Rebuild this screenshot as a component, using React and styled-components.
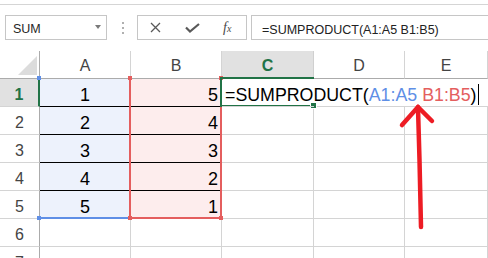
import React from 'react';
import styled, { createGlobalStyle, css } from 'styled-components';

const GlobalStyle = createGlobalStyle`
  html, body {
    margin: 0;
    padding: 0;
    background: #fff;
  }
  body {
    font-family: "Liberation Sans", Arial, sans-serif;
    overflow: hidden;
  }
`;

const GREEN = '#217346';
const GRID = '#d4d4d4';
const HEAD_LINE = '#ababab';

const tints = {
  blue: { fill: '#edf2fc', line: '#5f8fe6' },
  red: { fill: '#fdeded', line: '#e45e5e' },
};

// every grid item is placed by row/column so the overlays don't push cells around
const placed = css`
  grid-row: ${p => p.$r};
  grid-column: ${p => p.$c};
`;

const Screen = styled.div`
  position: relative;
  width: 488px;
  height: 258px;
  overflow: hidden;
  background: #fff;
`;

const RibbonEdge = styled.div`
  height: 4px;
  border-bottom: 1px solid #d5d5d5;
`;

const FormulaBar = styled.div`
  display: flex;
  align-items: center;
  height: 25px;
  margin-top: 10px;
  padding-left: 5px;
`;

const NameBox = styled.div`
  box-sizing: border-box;
  flex: none;
  width: 102px;
  height: 25px;
  border: 1px solid #c6c6c6;
  display: flex;
  align-items: flex-end;
  justify-content: space-between;
  padding: 0 5px 2px 7px;
  font-size: 12.5px;
  line-height: 15px;
  color: #262626;
`;

const DropArrow = styled.span`
  align-self: center;
  width: 0;
  height: 0;
  border-left: 3.5px solid transparent;
  border-right: 3.5px solid transparent;
  border-top: 4px solid #7a7a7a;
`;

const Grip = styled.div`
  flex: none;
  display: flex;
  flex-direction: column;
  gap: 3px;
  margin: 0 13px 0 15px;

  span {
    width: 2px;
    height: 2px;
    background: #b0b0b0;
  }
`;

const ActionBox = styled.div`
  box-sizing: border-box;
  flex: none;
  width: 110px;
  height: 25px;
  border: 1px solid #c6c6c6;
  display: flex;
  align-items: center;
  padding-left: 12px;
  gap: 24px;
  color: #595959;
`;

const Fx = styled.i`
  font-family: "Liberation Serif", "Times New Roman", serif;
  font-size: 14px;
  color: #4a4a4a;
  margin-left: -1px;

  small {
    font-size: 10px;
  }
`;

const FormulaInput = styled.div`
  box-sizing: border-box;
  flex: 1;
  height: 25px;
  margin-left: 4px;
  margin-right: -10px;
  border: 1px solid #c6c6c6;
  display: flex;
  align-items: flex-end;
  padding: 0 0 1px 10px;
  font-size: 12.5px;
  line-height: 15px;
  color: #222;
  white-space: nowrap;
`;

const Sheet = styled.div`
  display: grid;
  grid-template-columns: 40px 91px 91px 92px 91px 1fr;
  grid-template-rows: repeat(8, 28px);
  margin-top: 11px;
`;

const Corner = styled.div`
  ${placed}
  box-sizing: border-box;
  display: flex;
  justify-content: flex-end;
  align-items: flex-end;
  padding: 0 2px 3px 0;
  border-right: 1px solid ${HEAD_LINE};
  border-bottom: 1px solid ${HEAD_LINE};

  &::after {
    content: '';
    width: 0;
    height: 0;
    border-left: 19px solid transparent;
    border-bottom: 19px solid #dcdcdc;
  }
`;

const ColHeader = styled.div`
  ${placed}
  box-sizing: border-box;
  display: flex;
  justify-content: center;
  align-items: flex-end;
  padding-bottom: ${p => (p.$active ? 2 : 3)}px;
  font-size: 16px;
  line-height: 18px;
  color: ${p => (p.$active ? GREEN : '#444')};
  font-weight: ${p => (p.$active ? 'bold' : 'normal')};
  background: ${p => (p.$active ? '#e1e1e1' : '#fff')};
  border-right: 1px solid ${p => (p.$active ? '#d0d0d0' : GRID)};
  border-bottom: ${p => (p.$active ? `2px solid ${GREEN}` : `1px solid ${HEAD_LINE}`)};
`;

const RowHeader = styled.div`
  ${placed}
  box-sizing: border-box;
  display: flex;
  justify-content: center;
  align-items: flex-end;
  padding-bottom: 2px;
  font-size: 16px;
  line-height: 18px;
  color: ${p => (p.$active ? GREEN : '#444')};
  font-weight: ${p => (p.$active ? 'bold' : 'normal')};
  background: ${p => (p.$active ? '#e1e1e1' : '#fff')};
  border-right: ${p => (p.$active ? `2px solid ${GREEN}` : `1px solid ${HEAD_LINE}`)};
  border-bottom: 1px solid ${GRID};
`;

const Cell = styled.div`
  ${placed}
  box-sizing: border-box;
  display: flex;
  align-items: flex-end;
  justify-content: ${p => (p.$align === 'right' ? 'flex-end' : p.$align === 'center' ? 'center' : 'flex-start')};
  padding: 0 3px 1px 3px;
  font-size: 18px;
  line-height: 20px;
  color: #000;
  white-space: nowrap;
  background: ${p => (p.$tint ? tints[p.$tint].fill : '#fff')};
  border-right: ${p => (p.$open ? 'none' : `1px solid ${GRID}`)};
  border-bottom: 1px solid ${p => (p.$ruled ? '#000' : GRID)};
`;

const EditCell = styled(Cell)`
  position: relative;
  z-index: 4;
  overflow: visible;
  background: transparent;
  font-size: 17.8px;
`;

const Ref = styled.span`
  color: ${p => tints[p.$tint].line};
`;

const Caret = styled.span`
  display: inline-block;
  width: 1px;
  height: 21px;
  margin-left: 1px;
  vertical-align: -4px;
  background: #000;
`;

const RangeFrame = styled.div`
  position: relative;
  z-index: 2;
  pointer-events: none;
  grid-column: ${p => p.$c};
  grid-row: 2 / 7;
  margin-left: ${p => (p.$boxed ? -2 : 0)}px;
  border-bottom: 2px solid ${p => tints[p.$tint].line};
  border-left: ${p => (p.$boxed ? `2px solid ${tints[p.$tint].line}` : 'none')};
  border-right: ${p => (p.$boxed ? `2px solid ${tints[p.$tint].line}` : 'none')};
`;

const Handle = styled.span`
  position: absolute;
  width: 4px;
  height: 4px;
  background: ${p => tints[p.$tint].line};
  ${p => (p.$top ? 'top: -3px;' : 'bottom: -3px;')}
  ${p => (p.$right ? 'right: -3px;' : 'left: -3px;')}
`;

/* the active cell's right edge is hidden while its text spills into D and E */
const ActiveFrame = styled.div`
  position: relative;
  z-index: 3;
  pointer-events: none;
  grid-column: 4;
  grid-row: 2;
  margin: -2px 0 0 -2px;
  border: 2px solid ${GREEN};
  border-right: none;

  &::after {
    content: '';
    position: absolute;
    right: -3px;
    bottom: -4px;
    width: 5px;
    height: 5px;
    background: ${GREEN};
    border: 1px solid #fff;
  }
`;

const Annotation = styled.svg`
  position: absolute;
  left: 0;
  top: 0;
  pointer-events: none;
  z-index: 5;
`;

const columns = ['A', 'B', 'C', 'D', 'E'];
const colA = [1, 2, 3, 4, 5];
const colB = [5, 4, 3, 2, 1];
const rows = [1, 2, 3, 4, 5, 6, 7];

const CloseIcon = () => (
  <svg width="11" height="11" viewBox="0 0 11 11">
    <path d="M1 1 L10 10 M10 1 L1 10" stroke="#595959" strokeWidth="1.3" fill="none" />
  </svg>
);

const CheckIcon = () => (
  <svg width="15" height="10" viewBox="0 0 15 10">
    <path d="M1 4.5 L5 8.5 L14 1" stroke="#595959" strokeWidth="2.2" fill="none" strokeLinejoin="miter" />
  </svg>
);

const renderCell = (row, col, ci) => {
  const pos = { key: `${col}${row}`, $r: row + 1, $c: ci + 2 };
  if (col === 'A' && row <= 5) {
    return <Cell {...pos} $tint="blue" $align="center" $ruled={row < 5}>{colA[row - 1]}</Cell>;
  }
  if (col === 'B' && row <= 5) {
    return <Cell {...pos} $tint="red" $align="right" $ruled={row < 5}>{colB[row - 1]}</Cell>;
  }
  if (col === 'C' && row === 1) {
    return (
      <EditCell {...pos} $open>
        <span>
          =SUMPRODUCT(<Ref $tint="blue">A1:A5</Ref> <Ref $tint="red">B1:B5</Ref>)<Caret />
        </span>
      </EditCell>
    );
  }
  return <Cell {...pos} $open={row === 1 && (col === 'D' || col === 'E')} />;
};

export default function App() {
  return (
    <>
      <GlobalStyle />
      <Screen>
        <RibbonEdge />
        <FormulaBar>
          <NameBox>
            <span>SUM</span>
            <DropArrow />
          </NameBox>
          <Grip>
            <span />
            <span />
            <span />
          </Grip>
          <ActionBox>
            <CloseIcon />
            <CheckIcon />
            <Fx>f<small>x</small></Fx>
          </ActionBox>
          <FormulaInput>=SUMPRODUCT(A1:A5 B1:B5)</FormulaInput>
        </FormulaBar>

        <Sheet>
          <Corner $r={1} $c={1} />
          {columns.map((c, ci) => (
            <ColHeader key={c} $r={1} $c={ci + 2} $active={c === 'C'}>{c}</ColHeader>
          ))}
          {rows.map(r => (
            <React.Fragment key={r}>
              <RowHeader $r={r + 1} $c={1} $active={r === 1}>{r}</RowHeader>
              {columns.map((c, ci) => renderCell(r, c, ci))}
            </React.Fragment>
          ))}

          <RangeFrame $c={2} $tint="blue">
            <Handle $tint="blue" $top />
            <Handle $tint="blue" />
          </RangeFrame>
          <RangeFrame $c={3} $tint="red" $boxed>
            <Handle $tint="red" $top />
            <Handle $tint="red" $top $right />
            <Handle $tint="red" />
            <Handle $tint="red" $right />
          </RangeFrame>
          <ActiveFrame />
        </Sheet>

        <Annotation width="488" height="258" viewBox="0 0 488 258">
          <g stroke="#ed1c24" strokeWidth="4.5" strokeLinecap="round" strokeLinejoin="round" fill="none">
            <path d="M418 108 L419.5 160 L421 227" />
            <path d="M418 107 L402 125" />
            <path d="M418 107 L432 121" />
          </g>
        </Annotation>
      </Screen>
    </>
  );
}
